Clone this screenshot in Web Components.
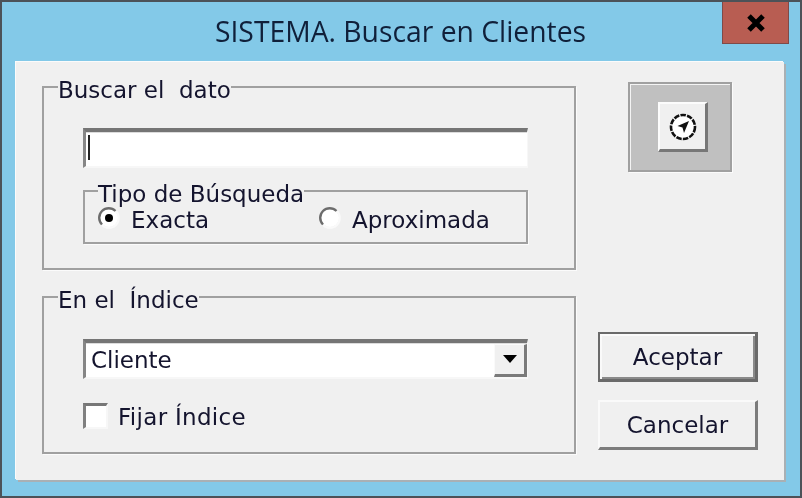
<!DOCTYPE html>
<html lang="es">
<head>
<meta charset="utf-8">
<title>SISTEMA. Buscar en Clientes</title>
<style>
  html, body { margin: 0; padding: 0; background: #4c5258; }
  body { font-family: "DejaVu Sans", sans-serif; font-size: 23px; color: #14142e; }
</style>
</head>
<body>
<win-dialog>
  <span slot="title">SISTEMA. Buscar en Clientes</span>
  <win-group class="first" label="Buscar el&nbsp; dato">
    <win-text></win-text>
    <win-group class="tipo" label="Tipo de Búsqueda">
      <win-radio checked>Exacta</win-radio>
      <win-radio>Aproximada</win-radio>
    </win-group>
  </win-group>
  <win-group class="second" label="En el&nbsp; Índice">
    <win-combo>Cliente</win-combo>
    <win-check>Fijar Índice</win-check>
  </win-group>
  <win-pic slot="side"></win-pic>
  <win-button slot="actions" default>Aceptar</win-button>
  <win-button slot="actions">Cancelar</win-button>
</win-dialog>

<script>
const dialogTemplate = document.createElement("template");
dialogTemplate.innerHTML = `
<style>
  :host {
    display: flex;
    flex-direction: column;
    width: 802px;
    height: 498px;
    box-sizing: border-box;
    background: #83c9e8;
    border: 2px solid #4c5258;
    padding: 0 16px 16px 14px;
    filter: blur(0.4px);
  }
  .bar {
    display: grid;
    grid-template-columns: 1fr auto 1fr;
    height: 60px;
    margin-right: -1px;
  }
  .title {
    grid-column: 2;
    font: 28.3px "Open Sans", sans-serif;
    color: #10203a;
    line-height: 58px;
  }
  .close {
    grid-column: 3;
    justify-self: end;
    box-sizing: border-box;
    width: 67px;
    height: 42px;
    margin-right: -4px;
    background: #b85d52;
    border: 1px solid #7f4a48;
    border-top: 0;
    display: flex;
    align-items: center;
    justify-content: center;
  }
  .client {
    flex: 1;
    display: flex;
    background: #f0f0f0;
    box-shadow: -1px -1px 0 #fbfbfb, 2px 2px 0 #a9b0b4;
    padding: 12px 0 0 26px;
    min-height: 0;
  }
  .left { width: 534px; display: flex; flex-direction: column; gap: 14px; }
  .right { width: 160px; margin-left: 22px; display: flex; flex-direction: column; padding: 8px 0 30px; }
  .actions { margin-top: auto; display: flex; flex-direction: column; gap: 18px; }
</style>
<div class="bar">
  <div class="title"><slot name="title"></slot></div>
  <div class="close">
    <svg width="20" height="18" viewBox="0 0 20 18"><path d="M3 2 L17 16 M17 2 L3 16" stroke="#000" stroke-width="5" fill="none"/></svg>
  </div>
</div>
<div class="client">
  <div class="left"><slot></slot></div>
  <div class="right">
    <slot name="side"></slot>
    <div class="actions"><slot name="actions"></slot></div>
  </div>
</div>
`;

class WinDialog extends HTMLElement {
  connectedCallback() {
    const root = this.attachShadow({ mode: "open" });
    root.appendChild(dialogTemplate.content.cloneNode(true));
  }
}

const groupTemplate = document.createElement("template");
groupTemplate.innerHTML = `
<style>
  :host { display: block; }
  :host(.first) fieldset { padding: 28px 46px 24px 39px; }
  :host(.second) fieldset { padding: 29px 46px 23px 39px; }
  :host(.tipo) { margin-top: 11px; }
  :host(.tipo) fieldset { display: flex; padding: 4px 0 9px 13px; }
  :host(.tipo) legend { margin-left: 0; line-height: 24px; }
  fieldset {
    margin: 0;
    min-width: 0;
    border: 2px solid #a0a0a0;
    box-shadow: 1px 1px 0 #fbfbfb;
  }
  legend {
    padding: 0;
    margin-left: -25px;
    line-height: 26px;
    background: #f0f0f0;
    white-space: nowrap;
    transform: translateY(3px);
  }
</style>
<fieldset><legend></legend><slot></slot></fieldset>
`;

class WinGroup extends HTMLElement {
  connectedCallback() {
    const root = this.attachShadow({ mode: "open" });
    root.appendChild(groupTemplate.content.cloneNode(true));
    root.querySelector("legend").textContent = this.getAttribute("label");
  }
}

const sunken = `
  box-sizing: border-box;
  background: #fff;
  border-style: solid;
  border-width: 4px 1px 2px 3px;
  border-color: #757575 #f7f7f7 #f7f7f7 #868686;
`;

const textTemplate = document.createElement("template");
textTemplate.innerHTML = `
<style>
  :host { display: block; height: 40px; ${sunken} padding: 3px 0 0 2px; box-shadow: inset 0 1px 0 #dcdcdc; }
  i { display: block; width: 2px; height: 25px; background: #222; }
</style>
<i></i>
`;

class WinText extends HTMLElement {
  connectedCallback() {
    const root = this.attachShadow({ mode: "open" });
    root.appendChild(textTemplate.content.cloneNode(true));
  }
}

const comboTemplate = document.createElement("template");
comboTemplate.innerHTML = `
<style>
  :host { display: flex; align-items: center; justify-content: space-between; height: 40px; ${sunken} padding-left: 5px; box-shadow: inset 0 1px 0 #dcdcdc; }
  .drop {
    box-sizing: border-box;
    width: 33px;
    height: 33px;
    background: #f0f0f0;
    border-style: solid;
    border-width: 1px 3px 3px 1px;
    border-color: #fafafa #7a7a7a #7a7a7a #fafafa;
    display: flex;
    align-items: center;
    justify-content: center;
  }
</style>
<slot></slot>
<div class="drop">
  <svg width="14" height="8" viewBox="0 0 14 8"><path d="M0 0 H14 L7 8 Z" fill="#000"/></svg>
</div>
`;

class WinCombo extends HTMLElement {
  connectedCallback() {
    const root = this.attachShadow({ mode: "open" });
    root.appendChild(comboTemplate.content.cloneNode(true));
  }
}

const radioTemplate = document.createElement("template");
radioTemplate.innerHTML = `
<style>
  :host { display: flex; align-items: center; gap: 11px; height: 26px; width: 221px; flex: none; }
  svg { flex: none; margin-top: -4px; }
  circle.dot { display: none; }
  :host([checked]) circle.dot { display: block; }
</style>
<svg width="22" height="22" viewBox="0 0 22 22">
  <circle cx="11" cy="11" r="9" fill="#fff"/>
  <circle cx="11" cy="11" r="9.8" fill="none" stroke="#fafafa" stroke-width="2"/>
  <path d="M17.5 4 A9.5 9.5 0 0 0 4 17.5" fill="none" stroke="#6c6c6c" stroke-width="2.4"/>
  <circle class="dot" cx="11" cy="11" r="4" fill="#000"/>
</svg>
<slot></slot>
`;

class WinRadio extends HTMLElement {
  connectedCallback() {
    const root = this.attachShadow({ mode: "open" });
    root.appendChild(radioTemplate.content.cloneNode(true));
  }
}

const checkTemplate = document.createElement("template");
checkTemplate.innerHTML = `
<style>
  :host { display: flex; align-items: center; gap: 10px; margin-top: 24px; height: 26px; letter-spacing: 0.3px; }
  .box {
    box-sizing: border-box;
    width: 25px;
    height: 26px;
    background: #fff;
    border-style: solid;
    border-width: 3px 2px 2px 3px;
    border-color: #777 #f7f7f7 #f7f7f7 #808080;
  }
  span { margin-top: 2px; }
</style>
<div class="box"></div>
<span><slot></slot></span>
`;

class WinCheck extends HTMLElement {
  connectedCallback() {
    const root = this.attachShadow({ mode: "open" });
    root.appendChild(checkTemplate.content.cloneNode(true));
  }
}

const picTemplate = document.createElement("template");
picTemplate.innerHTML = `
<style>
  :host {
    display: flex;
    align-items: center;
    justify-content: center;
    box-sizing: border-box;
    width: 104px;
    height: 90px;
    margin-left: 30px;
    background: #c0c0c0;
    border-style: solid;
    border-width: 2px;
    border-color: #a0a0a0;
    box-shadow: inset 1px 1px 0 #f4f4f4, 1px 1px 0 #fbfbfb;
  }
  .btn {
    box-sizing: border-box;
    width: 50px;
    height: 50px;
    margin-left: 6px;
    background: #f0f0f0;
    border-style: solid;
    border-width: 2px 3px 3px 2px;
    border-color: #fcfcfc #777 #777 #fcfcfc;
    display: flex;
    align-items: center;
    justify-content: center;
  }
</style>
<div class="btn">
  <svg width="28" height="28" viewBox="0 0 28 28">
    <circle cx="14" cy="14" r="12" fill="#fff" stroke="#111" stroke-width="2.6" stroke-dasharray="5.5 1.2"/>
    <path d="M20 8 L8.5 13 L13.5 14.5 L15 20 Z" fill="#111"/>
  </svg>
</div>
`;

class WinPic extends HTMLElement {
  connectedCallback() {
    const root = this.attachShadow({ mode: "open" });
    root.appendChild(picTemplate.content.cloneNode(true));
  }
}

const buttonTemplate = document.createElement("template");
buttonTemplate.innerHTML = `
<style>
  :host {
    display: flex;
    align-items: center;
    justify-content: center;
    box-sizing: border-box;
    width: 160px;
    height: 50px;
    background: #f0f0f0;
    border-style: solid;
    border-width: 2px 3px 3px 2px;
    border-color: #fafafa #7c7c7c #7c7c7c #fafafa;
  }
  :host([default]) {
    border-color: #6a6a6a;
    box-shadow: inset 2px 2px 0 #fafafa, inset -2px -2px 0 #8a8a8a;
  }
</style>
<slot></slot>
`;

class WinButton extends HTMLElement {
  connectedCallback() {
    const root = this.attachShadow({ mode: "open" });
    root.appendChild(buttonTemplate.content.cloneNode(true));
  }
}

customElements.define("win-dialog", WinDialog);
customElements.define("win-group", WinGroup);
customElements.define("win-text", WinText);
customElements.define("win-combo", WinCombo);
customElements.define("win-radio", WinRadio);
customElements.define("win-check", WinCheck);
customElements.define("win-pic", WinPic);
customElements.define("win-button", WinButton);
</script>
</body>
</html>
